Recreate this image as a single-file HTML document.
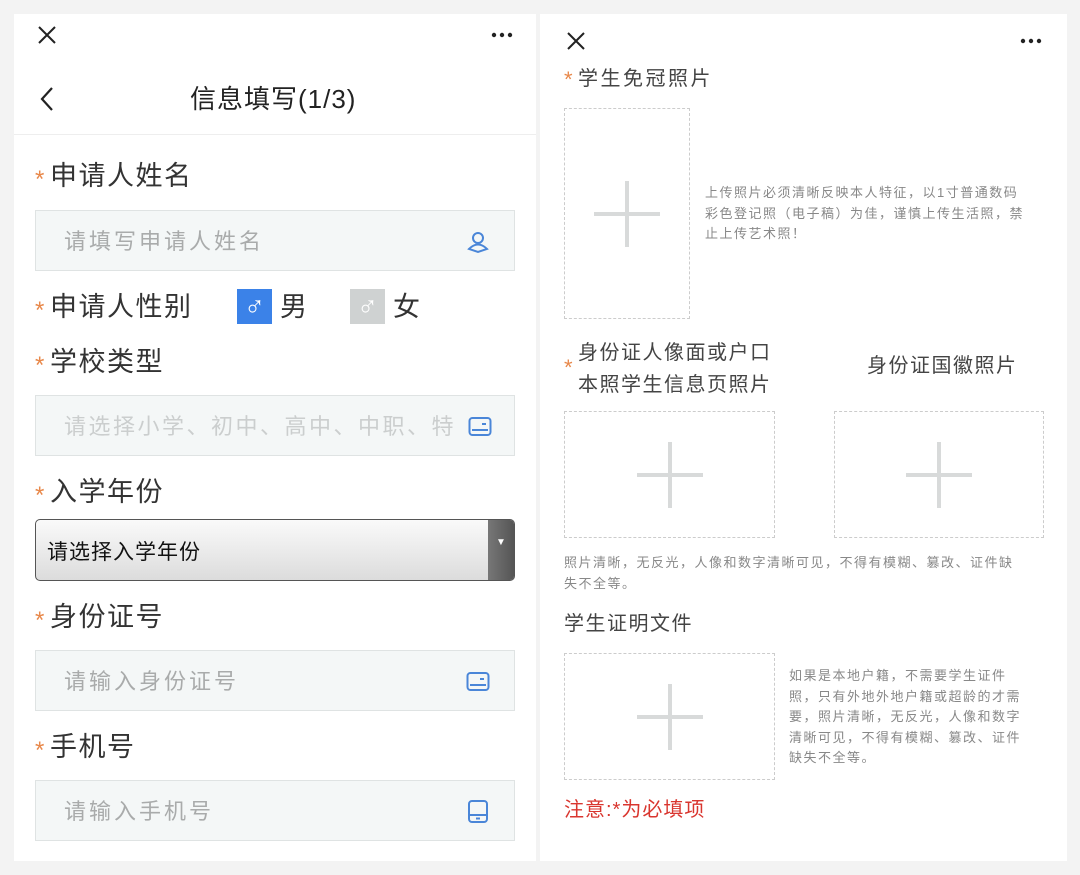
<!DOCTYPE html>
<html><head><meta charset="utf-8"><style>
*{margin:0;padding:0;box-sizing:border-box}
body{width:1080px;height:875px;background:#f3f3f3;position:relative;overflow:hidden;font-family:"Liberation Sans","Noto Sans CJK SC",sans-serif;color:#333}
.a{position:absolute;white-space:nowrap}
.pan{position:absolute;background:#fff}
.lbl{font-size:27px;color:#333;line-height:30px;letter-spacing:1.5px}
.st{display:inline-block;width:15px;color:#e8884a;font-size:24px;vertical-align:-2px;letter-spacing:0}
.inp{position:absolute;left:35px;width:480px;height:61px;background:#f4f7f7;border:1px solid #dfe3e3}
.ph{position:absolute;left:28px;top:16px;font-size:22px;color:#a9abab;line-height:30px;letter-spacing:3px}
.ic{position:absolute;right:24px;top:19px}
.dash{position:absolute;border:1px dashed #ccc;background:#fff}
.plus{position:absolute;left:50%;top:50%;width:66px;height:66px;margin:-33px 0 0 -33px}
.plus:before{content:"";position:absolute;left:31px;top:0;width:4px;height:66px;background:#d8dada}
.plus:after{content:"";position:absolute;top:31px;left:0;height:4px;width:66px;background:#d8dada}
.sm{font-size:13px;color:#888;line-height:20.5px;letter-spacing:1.5px;white-space:normal}
.rl{font-size:20px;color:#444;line-height:26px;letter-spacing:2.5px}
</style></head><body>
<div class="pan" style="left:14px;top:14px;width:522px;height:847px"></div>
<div class="pan" style="left:540px;top:14px;width:527px;height:847px"></div>
<div class="a" style="left:14px;top:134px;width:522px;height:1px;background:#eee"></div>

<svg class="a" style="left:37px;top:25px" width="20" height="20"><path d="M2 2L18 18M18 2L2 18" stroke="#222" stroke-width="2"/></svg>
<svg class="a" style="left:490px;top:30px" width="26" height="10"><circle cx="4" cy="5" r="2.2" fill="#222"/><circle cx="12" cy="5" r="2.2" fill="#222"/><circle cx="20" cy="5" r="2.2" fill="#222"/></svg>
<svg class="a" style="left:40px;top:86px" width="14" height="26"><path d="M12 2L2 13L12 24" stroke="#222" stroke-width="2.2" fill="none"/></svg>
<div class="a" style="left:190px;top:84px;font-size:26px;color:#222;line-height:30px;letter-spacing:1px">信息填写(1/3)</div>

<div class="a lbl" style="left:35px;top:161px"><span class="st">*</span>申请人姓名</div>
<div class="inp" style="top:210px"><div class="ph">请填写申请人姓名</div>
<svg class="ic" width="24" height="24"><circle cx="12" cy="8" r="5" stroke="#4a86d8" stroke-width="2" fill="none"/><path d="M3 19Q12 10 21 19L12 22Z" stroke="#4a86d8" stroke-width="2" fill="none"/></svg></div>

<div class="a lbl" style="left:35px;top:292px"><span class="st">*</span>申请人性别</div>
<div class="a" style="left:237px;top:289px;width:35px;height:35px;background:#3b82e8;color:#fff;font-size:28px;text-align:center;line-height:35px">♂</div>
<div class="a lbl" style="left:280px;top:292px">男</div>
<div class="a" style="left:350px;top:289px;width:35px;height:35px;background:#cfd2d2;color:#fff;font-size:28px;text-align:center;line-height:35px">♂</div>
<div class="a lbl" style="left:393px;top:292px">女</div>

<div class="a lbl" style="left:35px;top:347px"><span class="st">*</span>学校类型</div>
<div class="inp" style="top:395px"><div class="ph" style="color:#cbcece;letter-spacing:2.5px">请选择小学、初中、高中、中职、特</div>
<svg class="ic" width="24" height="22" style="top:20px;right:22px;background:#f4f7f7"><rect x="1.5" y="2" width="21" height="17" rx="3" stroke="#4a86d8" stroke-width="2" fill="none"/><path d="M4 14H20M14 8H18" stroke="#4a86d8" stroke-width="2"/></svg></div>

<div class="a lbl" style="left:35px;top:477px"><span class="st">*</span>入学年份</div>
<div class="a" style="left:35px;top:519px;width:480px;height:62px;border:1px solid #555;border-radius:5px;background:linear-gradient(#fafafa,#dcdcdc);overflow:hidden">
<div style="position:absolute;left:11px;top:16px;font-size:21px;color:#111;letter-spacing:1px">请选择入学年份</div>
<div style="position:absolute;right:0;top:0;width:26px;height:62px;background:linear-gradient(90deg,#777,#555);color:#fff;font-size:10px;text-align:center;padding-top:17px">▼</div></div>

<div class="a lbl" style="left:35px;top:602px"><span class="st">*</span>身份证号</div>
<div class="inp" style="top:650px"><div class="ph">请输入身份证号</div>
<svg class="ic" width="24" height="22" style="top:20px"><rect x="1.5" y="2" width="21" height="17" rx="3" stroke="#4a86d8" stroke-width="2" fill="none"/><path d="M4 14H20M14 8H18" stroke="#4a86d8" stroke-width="2"/></svg></div>

<div class="a lbl" style="left:35px;top:732px"><span class="st">*</span>手机号</div>
<div class="inp" style="top:780px"><div class="ph">请输入手机号</div>
<svg class="ic" width="24" height="24" style="top:18px"><rect x="3" y="2" width="18" height="21" rx="3" stroke="#4a86d8" stroke-width="2" fill="none"/><path d="M4 16H20M10 19.5H14" stroke="#4a86d8" stroke-width="2"/></svg></div>

<svg class="a" style="left:566px;top:31px" width="20" height="20"><path d="M2 2L18 18M18 2L2 18" stroke="#222" stroke-width="2"/></svg>
<svg class="a" style="left:1019px;top:36px" width="26" height="10"><circle cx="4" cy="5" r="2.2" fill="#222"/><circle cx="12" cy="5" r="2.2" fill="#222"/><circle cx="20" cy="5" r="2.2" fill="#222"/></svg>

<div class="a rl" style="left:564px;top:66px"><span class="st" style="width:14px;font-size:22px">*</span>学生免冠照片</div>
<div class="dash" style="left:564px;top:108px;width:126px;height:211px"><div class="plus"></div></div>
<div class="a sm" style="left:705px;top:183px;width:325px">上传照片必须清晰反映本人特征，以1寸普通数码彩色登记照（电子稿）为佳，谨慎上传生活照，禁止上传艺术照！</div>

<div class="a" style="left:564px;top:355px;color:#e8884a;font-size:22px">*</div>
<div class="a rl" style="left:578px;top:337px;line-height:32px;letter-spacing:1.5px">身份证人像面或户口<br>本照学生信息页照片</div>
<div class="a rl" style="left:867px;top:353px;letter-spacing:1.5px">身份证国徽照片</div>
<div class="dash" style="left:564px;top:411px;width:211px;height:127px"><div class="plus"></div></div>
<div class="dash" style="left:834px;top:411px;width:210px;height:127px"><div class="plus"></div></div>
<div class="a sm" style="left:564px;top:553px;width:462px">照片清晰，无反光，人像和数字清晰可见，不得有模糊、篡改、证件缺失不全等。</div>

<div class="a rl" style="left:564px;top:611px;letter-spacing:1.5px">学生证明文件</div>
<div class="dash" style="left:564px;top:653px;width:211px;height:127px"><div class="plus"></div></div>
<div class="a sm" style="left:789px;top:666px;width:235px">如果是本地户籍，不需要学生证件照，只有外地外地户籍或超龄的才需要，照片清晰，无反光，人像和数字清晰可见，不得有模糊、篡改、证件缺失不全等。</div>

<div class="a" style="left:564px;top:797px;font-size:20px;color:#d9362f;line-height:26px;letter-spacing:1px">注意:*为必填项</div>
</body></html>
